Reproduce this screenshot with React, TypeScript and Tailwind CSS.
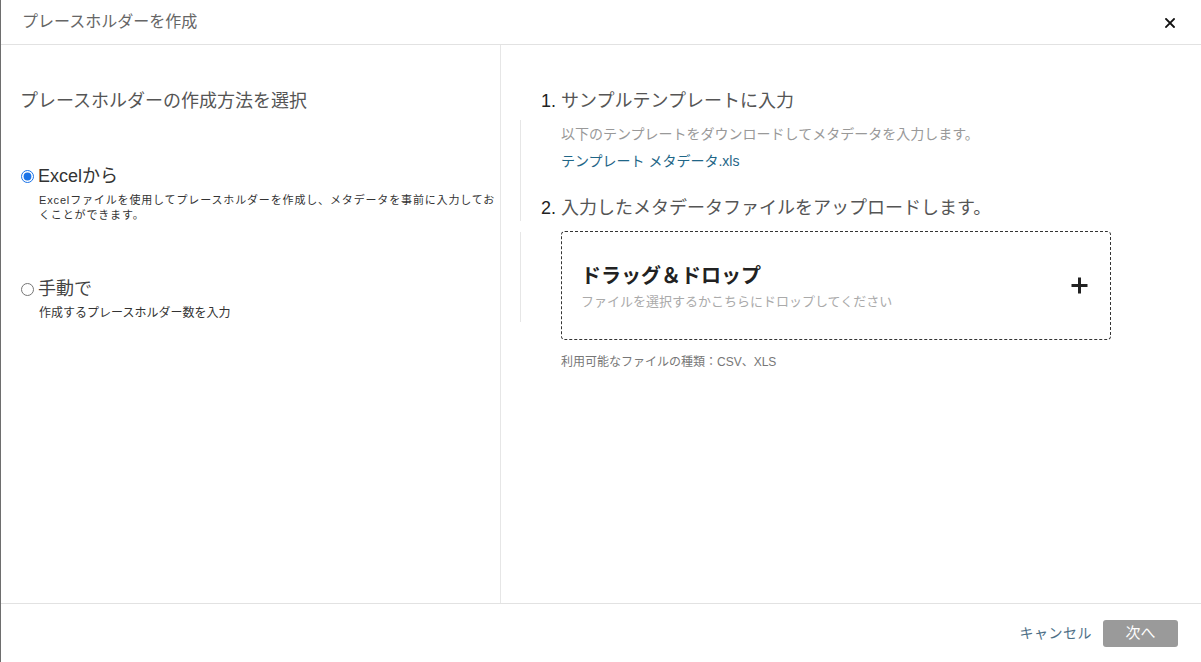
import React from "react";

export default function App() {
  return (
    <div className="w-[1201px] h-[662px] flex flex-col bg-white border-l border-[#6e6e6e] font-['Liberation_Sans','Noto_Sans_CJK_JP',sans-serif] text-[#333] overflow-hidden">
      {/* Header */}
      <div className="h-[45px] shrink-0 border-b border-[#e2e2e2] flex items-center justify-between pl-[21px] pr-[26px]">
        <div className="text-[16px] leading-[20px] text-[#666]">プレースホルダーを作成</div>
        <svg width="10" height="10" viewBox="0 0 10 10" className="mt-[1px]">
          <path d="M1 1 L9 9 M9 1 L1 9" stroke="#111" strokeWidth="1.8" strokeLinecap="square" />
        </svg>
      </div>

      {/* Body */}
      <div className="flex-1 flex min-h-0">
        {/* Left */}
        <div className="w-[500px] shrink-0 border-r border-[#e6e6e6] pl-[19px] pt-[44px]">
          <div className="text-[18px] leading-[24px] text-[#555]">プレースホルダーの作成方法を選択</div>

          <div className="mt-[51px]">
            <label className="flex items-center gap-[4px] ml-[1px]">
              <input type="radio" name="m" defaultChecked className="w-[13px] h-[13px] m-0 accent-[#1a73e8]" />
              <span className="text-[18px] leading-[24px] text-[#333]">Excelから</span>
            </label>
            <div className="ml-[19px] mt-[5px] text-[11px] leading-[15px] text-[#333] tracking-[0.85px]">
              Excelファイルを使用してプレースホルダーを作成し、メタデータを事前に入力してお
              <br />
              くことができます。
            </div>
          </div>

          <div className="mt-[54px]">
            <label className="flex items-center gap-[4px] ml-[1px]">
              <input type="radio" name="m" className="w-[13px] h-[13px] m-0" />
              <span className="text-[18px] leading-[24px] text-[#444]">手動で</span>
            </label>
            <div className="ml-[19px] mt-[5px] text-[12px] leading-[15px] text-[#333]">
              作成するプレースホルダー数を入力
            </div>
          </div>
        </div>

        {/* Right */}
        <div className="flex-1 pt-[44px]">
          <div className="ml-[40px] text-[18px] leading-[24px] text-[#555]">
            <span className="text-[#222]">1. </span>サンプルテンプレートに入力
          </div>
          <div className="flex mt-[7px]">
            <div className="ml-[19px] w-px h-[101px] bg-[#e6e6e6]" />
            <div className="ml-[40px] pt-[4px]">
              <div className="text-[14px] leading-[20px] text-[#999]">
                以下のテンプレートをダウンロードしてメタデータを入力します。
              </div>
              <div className="mt-[7px] text-[14px] leading-[20px] text-[#1f6687]">
                テンプレート メタデータ.xls
              </div>
            </div>
          </div>

          <div className="-mt-[25px] ml-[40px] text-[18px] leading-[24px] text-[#555]">
            <span className="text-[#222]">2. </span>入力したメタデータファイルをアップロードします。
          </div>
          <div className="flex mt-[11px]">
            <div className="ml-[19px] mt-[1px] w-px h-[90px] bg-[#e6e6e6]" />
            <div className="ml-[40px]">
              <div className="w-[550px] h-[109px] border border-dashed border-[#333] rounded-[4px] flex items-center justify-between pl-[19px] pr-[22px]">
                <div className="mt-[2px]">
                  <div className="text-[20px] leading-[26px] font-bold text-[#222]">ドラッグ＆ドロップ</div>
                  <div className="mt-[4px] text-[13px] leading-[18px] text-[#aaa]">
                    ファイルを選択するかこちらにドロップしてください
                  </div>
                </div>
                <svg width="17" height="17" viewBox="0 0 17 17" className="mt-[-1px]">
                  <path d="M8.5 0.5 V16.5 M0.5 8.5 H16.5" stroke="#222" strokeWidth="3" />
                </svg>
              </div>
              <div className="mt-[13px] text-[12px] leading-[18px] text-[#777]">
                利用可能なファイルの種類：CSV、XLS
              </div>
            </div>
          </div>
        </div>
      </div>

      {/* Footer */}
      <div className="h-[59px] shrink-0 border-t border-[#e2e2e2] flex items-center justify-end pr-[23px]">
        <div className="text-[14px] leading-[20px] text-[#4d6f86] tracking-[0.5px]">キャンセル</div>
        <div className="ml-[11px] w-[75px] h-[27px] rounded-[3px] bg-[#9a9a9a] flex items-center justify-center text-white text-[15px] leading-[20px]">
          次へ
        </div>
      </div>
    </div>
  );
}
